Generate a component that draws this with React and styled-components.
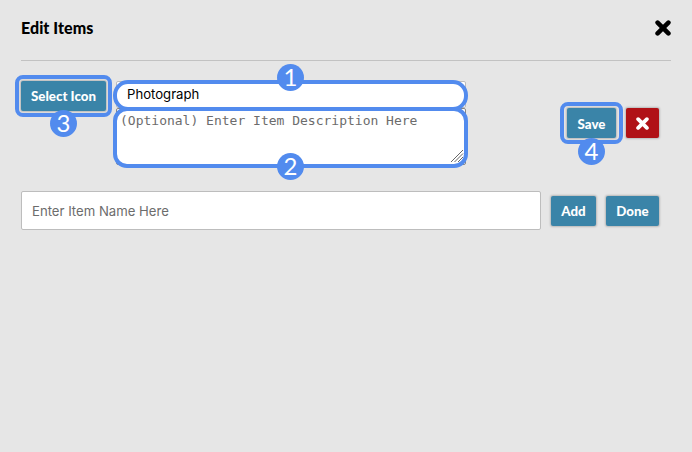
import React from "react";
import styled, { createGlobalStyle } from "styled-components";

const GlobalStyle = createGlobalStyle`
  *, *::before, *::after { box-sizing: border-box; }
  body { margin: 0; background: #e6e6e6; font-family: Lato, sans-serif; }
`;

const Dialog = styled.main`
  width: 692px;
  height: 452px;
  padding: 0 21px;
  background: #e6e6e6;
  overflow: hidden;
`;

const Header = styled.header`
  display: flex;
  justify-content: space-between;
  align-items: center;
  height: 61px;
  padding-bottom: 5px;
  border-bottom: 1px solid #c2c2c2;
`;

const Title = styled.h1`
  margin: 0;
  font-size: 16px;
  line-height: 20px;
  font-weight: 900;
  color: #000;
  letter-spacing: 0.05px;
`;

const IconButton = styled.button`
  display: flex;
  padding: 0;
  border: 0;
  background: none;
`;

const EditRow = styled.section`
  display: flex;
  align-items: flex-start;
  margin-top: 20px;
  height: 85px;
`;

const Fields = styled.div`
  display: flex;
  flex-direction: column;
  width: 350px;
  margin-left: 10px;
`;

const Actions = styled.div`
  display: flex;
  gap: 10px;
  margin: 27px 0 0 101px;
`;

const Anchor = styled.div`
  position: relative;
  display: flex;
  height: ${(p) => p.$height}px;
`;

const Button = styled.button`
  display: flex;
  align-items: center;
  justify-content: center;
  width: ${(p) => p.$width}px;
  height: 30px;
  padding: ${(p) => p.$padTop ?? 1}px 0 0;
  border: 0;
  border-radius: 2px;
  background: ${(p) => (p.$danger ? "#b01116" : "#3a84a8")};
  box-shadow: 0 0 2px 1px rgba(0, 0, 0, 0.2);
  color: #fff;
  font: 900 13.3px/16px Lato, sans-serif;
  white-space: nowrap;
`;

const NameInput = styled.input`
  width: 350px;
  height: 27px;
  padding: 0 10px 2px;
  border: 1px solid #bcbcbc;
  border-radius: 2px;
  background: #fff;
  color: #000;
  font: 13.15px Inter, sans-serif;
`;

const Description = styled.textarea`
  display: block;
  width: 350px;
  height: 57px;
  padding: 4px 3px;
  border: 1px solid #858585;
  border-radius: 2px;
  background: #fff;
  font: 13px/16px "DejaVu Sans Mono", monospace;
  resize: none;
  overflow: hidden;
  &::placeholder { color: #6c6c6c; opacity: 1; }
`;

const Grip = styled.svg`
  position: absolute;
  right: 2px;
  bottom: 2px;
`;

const Ring = styled.div`
  position: absolute;
  inset: ${(p) => p.$inset};
  border: 4px solid #528bee;
  border-radius: ${(p) => p.$radius}px;
  pointer-events: none;
  z-index: 1;
`;

const Badge = styled.span`
  position: absolute;
  left: ${(p) => p.$left}px;
  top: ${(p) => p.$top}px;
  width: 27px;
  height: 27px;
  border-radius: 50%;
  background: #528bee;
  color: #fff;
  font: 400 24px/26px Lato, sans-serif;
  text-align: center;
  z-index: 2;
`;

const AddRow = styled.section`
  display: flex;
  align-items: center;
  margin-top: 25px;
  height: 39px;
`;

const NewItemInput = styled.input`
  width: 520px;
  height: 39px;
  margin-right: 10px;
  padding: 1px 10px 0;
  border: 1px solid #bdbdbd;
  border-radius: 2px;
  background: #fff;
  font: 13.15px Inter, sans-serif;
  &::placeholder { color: #6c6c6c; opacity: 1; }
`;

const AddActions = styled.div`
  display: flex;
  gap: 10px;
`;

function Cross({ size, color }) {
  return (
    <svg width={size} height={size} viewBox="0 0 16 16">
      <path
        d="M2.6 2.6 13.4 13.4M13.4 2.6 2.6 13.4"
        fill="none"
        stroke={color}
        strokeWidth="4.6"
        strokeLinecap="round"
      />
    </svg>
  );
}

export default function App() {
  return (
    <>
      <GlobalStyle />
      <Dialog>
        <Header>
          <Title>Edit Items</Title>
          <IconButton aria-label="Close"><Cross size={16} color="#000" /></IconButton>
        </Header>
        <EditRow>
          <Anchor $height={31}>
            <Button $width={85} $padTop={0}>Select Icon</Button>
            <Ring $inset="-6px -6px -5px -6px" $radius={8} />
            <Badge $left={29} $top={29}>3</Badge>
          </Anchor>
          <Fields>
            <Anchor $height={27}>
              <NameInput defaultValue="Photograph" />
              <Ring $inset="-1px -2px -3px -3px" $radius={15} />
              <Badge $left={161} $top={-17}>1</Badge>
            </Anchor>
            <Anchor $height={57}>
              <Description placeholder="(Optional) Enter Item Description Here" />
              <Grip width="14" height="14" viewBox="0 0 14 14">
                <path d="M1 13 13 1M4.5 13 13 4.5M8 13 13 8" stroke="#666" strokeWidth="1" fill="none" />
              </Grip>
              <Ring $inset="-1px -2px -3px -3px" $radius={14} />
              <Badge $left={161} $top={45}>2</Badge>
            </Anchor>
          </Fields>
          <Actions>
            <Anchor $height={30}>
              <Button $width={49} $padTop={2}>Save</Button>
              <Ring $inset="-6px -7px -6px -7px" $radius={8} />
              <Badge $left={11} $top={30}>4</Badge>
            </Anchor>
            <Button $width={33} $danger aria-label="Cancel"><Cross size={13} color="#fff" /></Button>
          </Actions>
        </EditRow>
        <AddRow>
          <NewItemInput placeholder="Enter Item Name Here" />
          <AddActions>
            <Button $width={45}>Add</Button>
            <Button $width={53}>Done</Button>
          </AddActions>
        </AddRow>
      </Dialog>
    </>
  );
}
